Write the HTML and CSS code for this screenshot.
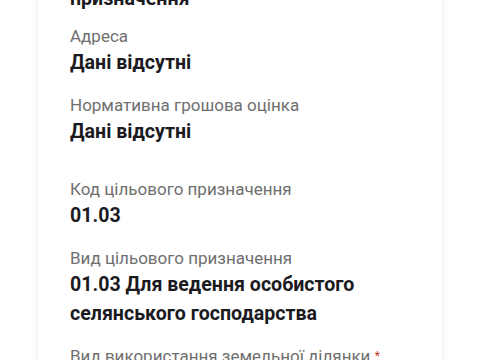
FILE: index.html
```html
<!DOCTYPE html>
<html lang="uk">
<head>
<meta charset="utf-8">
<link rel="stylesheet" href="styles.css">
</head>
<body>
<div class="page">
  <div class="card">
    <div class="field field-tight">
      <div class="value">Цільове</div>
      <div class="value">призначення</div>
    </div>
    <div class="field">
      <div class="label">Адреса</div>
      <div class="value">Дані відсутні</div>
    </div>
    <div class="field">
      <div class="label">Нормативна грошова оцінка</div>
      <div class="value">Дані відсутні</div>
    </div>
    <div class="field field-spaced">
      <div class="label">Код цільового призначення</div>
      <div class="value">01.03</div>
    </div>
    <div class="field">
      <div class="label">Вид цільового призначення</div>
      <div class="value">01.03 Для ведення особистого селянського господарства</div>
    </div>
    <div class="field">
      <div class="label">Вид використання земельної ділянки <span class="req">*</span></div>
      <div class="value">Дані відсутні</div>
    </div>
  </div>
</div>
</body>
</html>
```
FILE: styles.css
```css
html, body {
  margin: 0;
  padding: 0;
  background: #ffffff;
}
body {
  font-family: Roboto, "Noto Sans", sans-serif;
  width: 480px;
  height: 360px;
  overflow: hidden;
}
.page {
  padding: 0 38px;
}
.card {
  margin-top: -49px;
  background: #ffffff;
  box-shadow: 0 0 10px rgba(0, 0, 0, 0.07);
  padding: 0 32px 40px;
  display: flex;
  flex-direction: column;
  gap: 18px;
}
.field {
  display: flex;
  flex-direction: column;
}
.field-tight {
  margin-bottom: -5px;
}
.field-spaced {
  margin-top: 15px;
}
.label {
  font-size: 17px;
  line-height: 20px;
  color: #6f6f6f;
}
.value {
  margin-top: 2px;
  font-size: 19.6px;
  line-height: 29px;
  font-weight: 700;
  color: #1b1b1f;
  max-width: 300px;
}
.req {
  color: #c0392b;
  font-size: 12px;
  vertical-align: top;
}
```
